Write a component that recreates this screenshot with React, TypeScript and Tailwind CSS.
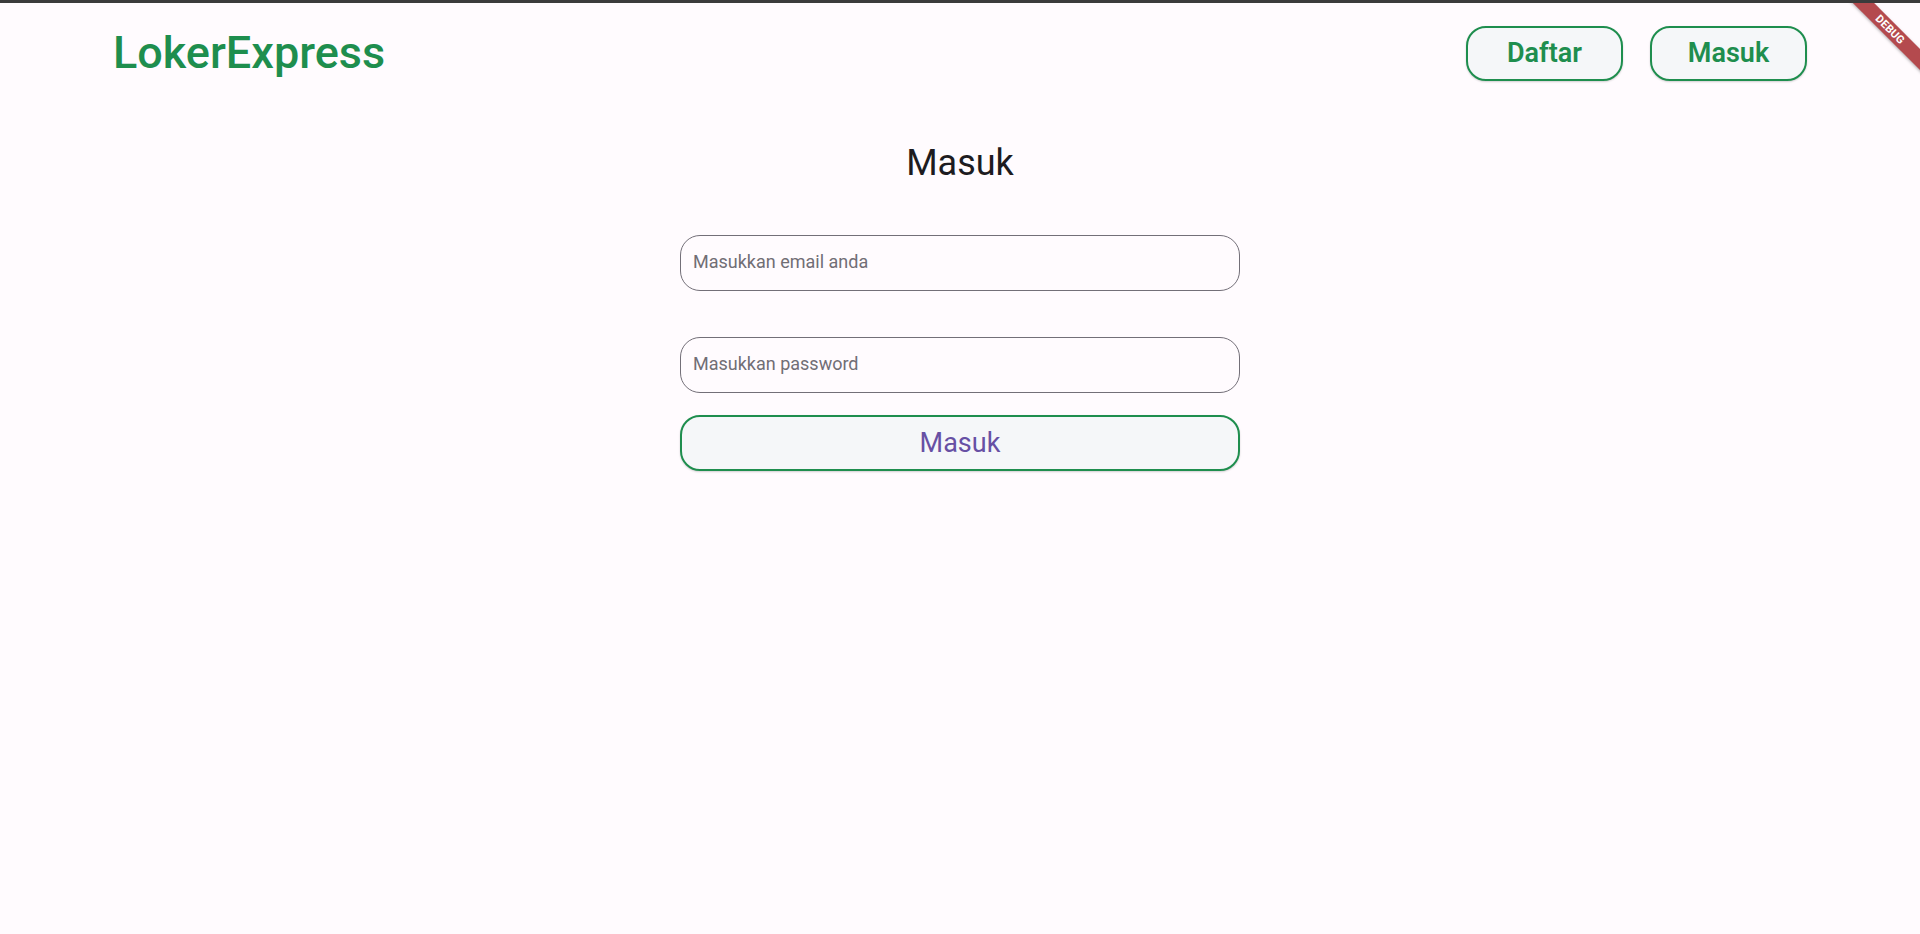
import React from "react";

export default function App() {
  return (
    <div
      className="relative w-full min-h-[934px] bg-[#fffbfe] overflow-hidden"
      style={{ fontFamily: "Roboto, 'Noto Sans', sans-serif" }}
    >
      <div className="h-[3px] bg-[#3b3b3b]" />
      <header className="flex items-start justify-between px-[113px] pt-[23px]">
        <div className="text-[45px] leading-[56px] font-medium text-[#1e8e4e] mt-[-1px] tracking-[0px]">
          LokerExpress
        </div>
        <div className="flex gap-[27px]">
          <button className="w-[157px] h-[55px] rounded-[20px] border-2 border-[#1e8e4e] bg-[#f5f7f9] text-[#1e8e4e] text-[27px] font-semibold shadow-[0_1px_2px_rgba(0,0,0,0.18)] flex items-center justify-center">
            Daftar
          </button>
          <button className="w-[157px] h-[55px] rounded-[20px] border-2 border-[#1e8e4e] bg-[#f5f7f9] text-[#1e8e4e] text-[27px] font-semibold shadow-[0_1px_2px_rgba(0,0,0,0.18)] flex items-center justify-center">
            Masuk
          </button>
        </div>
      </header>

      <main className="flex flex-col items-center">
        <h1 className="mt-[60px] text-[36px] leading-[44px] font-normal text-[#1d1b20]">Masuk</h1>
        <div className="mt-[50px] w-[560px] flex flex-col">
          <div className="h-[56px] rounded-[20px] border border-[#736f78] flex items-center pl-[12px] pb-[4px]">
            <span className="text-[18px] text-[#716e75]">Masukkan email anda</span>
          </div>
          <div className="mt-[46px] h-[56px] rounded-[20px] border border-[#736f78] flex items-center pl-[12px] pb-[4px]">
            <span className="text-[18px] text-[#716e75]">Masukkan password</span>
          </div>
          <button className="mt-[22px] h-[56px] rounded-[20px] border-[2.5px] border-[#1e8e4e] bg-[#f5f7f9] text-[#6750a4] text-[27px] font-normal shadow-[0_1px_2px_rgba(0,0,0,0.18)] flex items-center justify-center">
            Masuk
          </button>
        </div>
      </main>

      <div className="absolute top-[3px] right-0 w-[72px] h-[72px] overflow-hidden pointer-events-none">
        <div className="absolute top-[19px] right-[-32px] w-[124px] h-[15px] rotate-45 bg-[#b44a4e] flex items-center justify-center shadow-[0_1px_3px_rgba(0,0,0,0.3)]">
          <span className="text-[11px] leading-[11px] font-bold text-white tracking-[0.2px]">DEBUG</span>
        </div>
      </div>
    </div>
  );
}
